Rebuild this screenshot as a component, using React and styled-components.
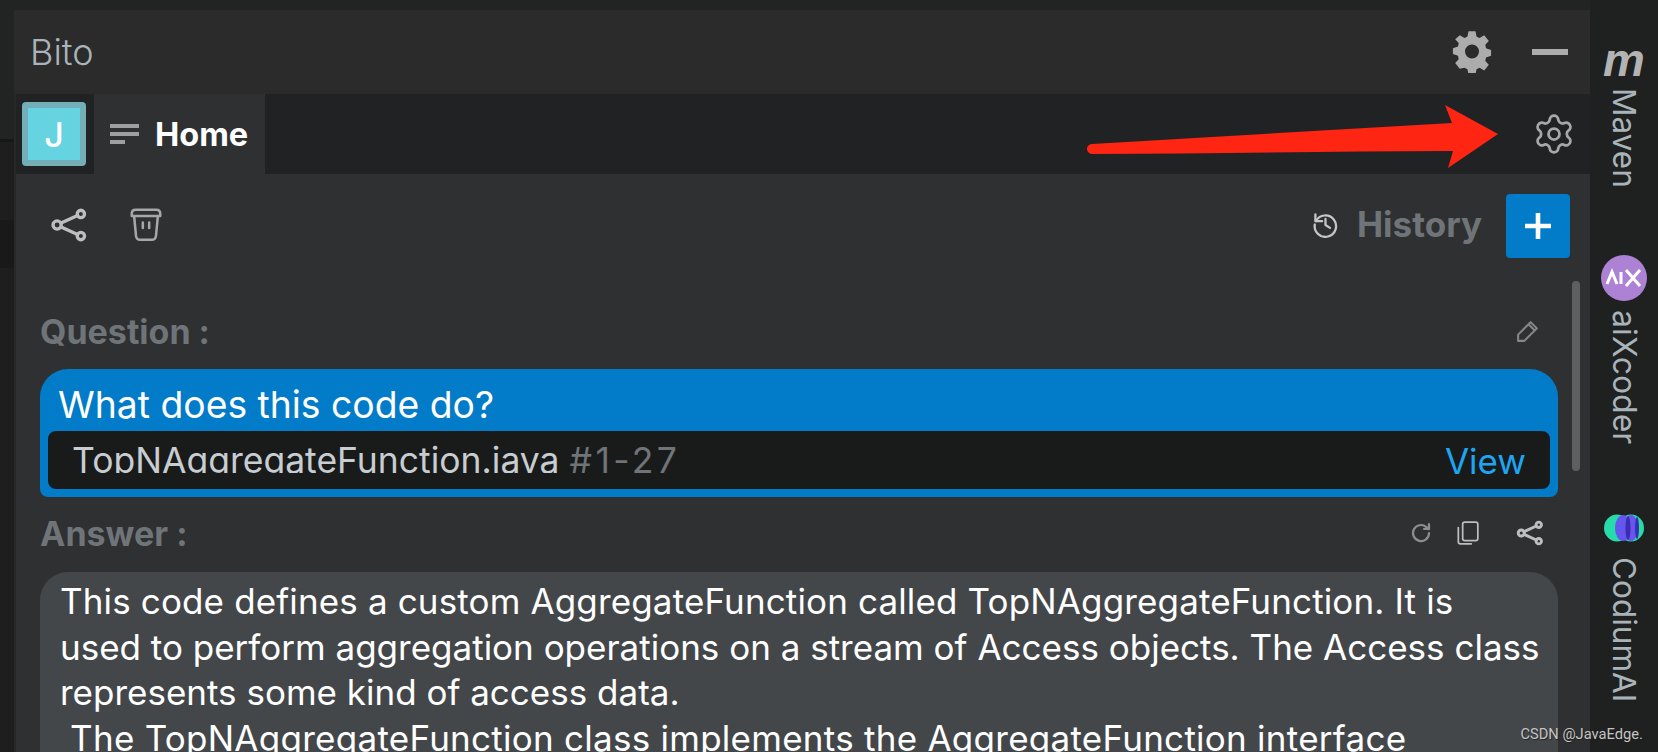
import React from "react"
import styled, { createGlobalStyle } from "styled-components"
import { Settings } from "lucide-react"

const GlobalStyle = createGlobalStyle`
  html, body {
    margin: 0;
    padding: 0;
    background: #1f2020;
  }
`

const Page = styled.div`
  position: relative;
  display: flex;
  width: 1658px;
  height: 752px;
  overflow: hidden;
  background: #202121;
  font-family: Inter, "Liberation Sans", sans-serif;
`

const LeftEdge = styled.div`
  display: flex;
  flex-direction: column;
  width: 14px;
  flex: none;
`

const EdgeBlock = styled.div`
  height: ${({ h }) => (h ? `${h}px` : "auto")};
  flex: ${({ h }) => (h ? "none" : 1)};
  background: ${({ bg }) => bg};
`

const Panel = styled.div`
  display: flex;
  flex-direction: column;
  width: 1576px;
  flex: none;
  padding-top: 10px;
  background: #222323;
`

const TitleBar = styled.div`
  display: flex;
  align-items: center;
  height: 84px;
  flex: none;
  padding: 0 22px 0 16px;
  background: #2b2b2b;
`

const Title = styled.span`
  flex: 1;
  font-size: 36px;
  font-weight: 300;
  color: #a9b4ba;
`

const TitleGear = styled.svg`
  width: 42px;
  height: 42px;
  margin-right: 39px;
  fill: #acacac;
`

const Minimize = styled.div`
  width: 36px;
  height: 6px;
  background: #acacac;
`

const Body = styled.div`
  display: flex;
  flex-direction: column;
  flex: 1;
  min-height: 0;
  border-left: 2px solid #272828;
  background: #2f3032;
`

const TabRow = styled.div`
  display: flex;
  align-items: center;
  height: 80px;
  flex: none;
  padding-right: 14px;
  background: #212224;
`

const AvatarCell = styled.div`
  display: flex;
  justify-content: center;
  width: 78px;
  flex: none;
  padding-right: 2px;
  box-sizing: border-box;
`

const Avatar = styled.div`
  display: flex;
  align-items: center;
  justify-content: center;
  box-sizing: border-box;
  width: 64px;
  height: 64px;
  border: 6px solid #74aeb8;
  border-radius: 4px;
  background: #66d3e1;
  font-size: 34px;
  font-weight: 500;
  color: #fff;
`

const HomeTab = styled.div`
  display: flex;
  align-items: center;
  gap: 16px;
  align-self: stretch;
  width: 171px;
  box-sizing: border-box;
  padding-left: 16px;
  background: #2f3032;
  font-size: 32.5px;
  font-weight: 700;
  color: #fff;
`

const Lines = styled.svg`
  width: 29px;
  height: 21px;
  fill: #9d9fa1;
`

const Spacer = styled.div`
  flex: 1;
`

const OutlineGear = styled(Settings)`
  width: 44px;
  height: 44px;
  color: #a5a7a8;
  flex: none;
`

const Toolbar = styled.div`
  display: flex;
  align-items: center;
  height: 64px;
  flex: none;
  margin-top: 20px;
  padding: 0 20px 0 34px;
`

const ToolIcon = styled.svg`
  width: ${({ size }) => size || 24}px;
  height: ${({ size }) => size || 24}px;
  margin-left: ${({ gap }) => gap || 0}px;
  margin-right: ${({ after }) => after || 0}px;
  margin-bottom: ${({ lift }) => lift || 0}px;
  fill: none;
  stroke: ${({ color }) => color || "#bcbebf"};
  stroke-width: ${({ sw }) => sw || 2};
  stroke-linecap: round;
  stroke-linejoin: round;
  flex: none;
`

const HistoryLabel = styled.span`
  margin: 0 24px 5px 18px;
  font-size: 35px;
  font-weight: 700;
  color: #6f7478;
`

const AddButton = styled.div`
  display: flex;
  align-items: center;
  justify-content: center;
  width: 64px;
  height: 64px;
  border-radius: 4px;
  background: #027bc9;
`

const Content = styled.div`
  position: relative;
  display: flex;
  flex-direction: column;
  flex: 1;
  min-height: 0;
  padding: 0 32px 0 24px;
  overflow: hidden;
`

const Scrollbar = styled.div`
  position: absolute;
  top: 23px;
  right: 10px;
  width: 8px;
  height: 190px;
  border-radius: 4px;
  background: #5e5f60;
`

const SectionHead = styled.div`
  display: flex;
  align-items: center;
  height: 44px;
  flex: none;
  margin-top: ${({ top }) => top}px;
`

const Label = styled.span`
  flex: 1;
  font-size: 34px;
  font-weight: 700;
  color: #6f7478;
`

const QuestionCard = styled.div`
  height: 128px;
  flex: none;
  box-sizing: border-box;
  margin-top: 16px;
  padding: 0 8px;
  border-radius: 28px 28px 8px 8px;
  background: #027bc9;
`

const QuestionText = styled.div`
  height: 62px;
  padding-left: 10px;
  font-size: 37.3px;
  line-height: 71px;
  white-space: nowrap;
  color: #fff;
`

const FileBar = styled.div`
  display: flex;
  height: 58px;
  padding: 0 24px;
  border-radius: 8px;
  background: #191b1b;
`

const FileClip = styled.div`
  flex: 1;
  height: 42px;
  overflow: hidden;
  font-size: 35.5px;
  line-height: 60px;
  white-space: nowrap;
  color: #c7cdd1;
`

const FileRange = styled.span`
  letter-spacing: 3.4px;
  color: #6f7478;
`

const ViewLink = styled.span`
  font-size: 35px;
  line-height: 60px;
  color: #1ea5f2;
`

const AnswerCard = styled.div`
  flex: 1;
  margin-top: 17px;
  padding: 7px 20px 0;
  border-radius: 28px 28px 0 0;
  background: #44474a;
  font-size: 35px;
  line-height: 45.5px;
  color: #fff;
`

const AnswerLine = styled.div`
  white-space: pre;
  letter-spacing: ${({ track }) => track || 0}px;
`

const Sidebar = styled.div`
  display: flex;
  flex-direction: column;
  align-items: center;
  width: 68px;
  flex: none;
  padding-top: 40px;
  background: #1f2020;
`

const MavenMark = styled.span`
  font-family: "Liberation Sans", sans-serif;
  font-size: 47px;
  font-style: italic;
  font-weight: 700;
  line-height: 40px;
  color: #b3b3b3;
`

const VerticalLabel = styled.span`
  margin-top: ${({ top }) => top}px;
  writing-mode: vertical-rl;
  font-size: ${({ size }) => size || 31.5}px;
  font-weight: 400;
  line-height: 40px;
  color: #a9b4ba;
`

const AixBadge = styled.svg`
  width: 46px;
  height: 46px;
  margin-top: ${({ top }) => top}px;
  flex: none;
`

const CodiumMark = styled.svg`
  width: 40px;
  height: 28px;
  margin-top: ${({ top }) => top}px;
  flex: none;
`

const Arrow = styled.svg`
  position: absolute;
  top: 100px;
  left: 1084px;
  width: 420px;
  height: 72px;
`

const Watermark = styled.span`
  position: absolute;
  right: 15px;
  bottom: 9px;
  font-family: Roboto, sans-serif;
  font-size: 14.7px;
  color: #c4c4c4;
  text-shadow: 1px 1px 1px #222;
`

const ShareIcon = (props) => (
  <ToolIcon viewBox="0 0 24 24" {...props}>
    <circle cx="19.5" cy="5" r="2.3" />
    <circle cx="4.5" cy="12" r="2.6" />
    <circle cx="19.5" cy="19" r="2.3" />
    <path d="M7 10.8 17.4 6M7 13.2 17.4 18" />
  </ToolIcon>
)

export default function App() {
  return (
    <Page>
      <GlobalStyle />
      <LeftEdge>
        <EdgeBlock h={139} bg="#222323" />
        <EdgeBlock h={3} bg="#161717" />
        <EdgeBlock h={78} bg="#1e1e1e" />
        <EdgeBlock h={48} bg="#191919" />
        <EdgeBlock bg="#1e1e1e" />
      </LeftEdge>
      <Panel>
        <TitleBar>
          <Title>Bito</Title>
          <TitleGear viewBox="0 0 24 24">
            <path
              fillRule="evenodd"
              d="M10 1h4l.6 3 1.7.8L19 3.2l2.6 3.3-2 2.2.4 1.9 2.9 1v3.4l-2.9 1-.4 1.9 2 2.2-2.6 3.3-2.7-1.6-1.7.8-.6 3h-4l-.6-3-1.7-.8L5 22.4l-2.6-3.3 2-2.2-.4-1.9-2.9-1v-3.4l2.9-1 .4-1.9-2-2.2L5 3.2l2.7 1.6 1.7-.8zM12 8.5a4 4 0 1 0 0 8 4 4 0 0 0 0-8z"
              transform="translate(0 -.8)"
            />
          </TitleGear>
          <Minimize />
        </TitleBar>
        <Body>
          <TabRow>
            <AvatarCell>
              <Avatar>J</Avatar>
            </AvatarCell>
            <HomeTab>
              <Lines viewBox="0 0 29 21">
                <rect width="29" height="4" y="0" />
                <rect width="29" height="4" y="8" />
                <rect width="15" height="4" y="16" />
              </Lines>
              Home
            </HomeTab>
            <Spacer />
            <OutlineGear strokeWidth={1.5} />
          </TabRow>
          <Toolbar>
            <ShareIcon size={38} sw={2.1} lift={2} />
            <ToolIcon viewBox="0 0 24 24" size={38} gap={39} sw={1.6} lift={4} color="#a5a7a8">
              <path d="M3 5.5c0-1.5 1-2.5 2.5-2.5h13C20 3 21 4 21 5.5V7H3zM4.5 7l1.2 12.5C5.9 21 6.8 22 8.300 22h7.400c1.500 0 2.400-1 2.600-2.500L19.500 7M10 11v3.500M14 11v3.500" />
            </ToolIcon>
            <Spacer />
            <ToolIcon viewBox="0 0 24 24" size={27} sw={2} lift={4} color="#c3c7c9">
              <path d="M3 3v6h6" />
              <path d="M3.5 9A9.500 9.500 0 1 1 2.500 12" />
              <path d="M12 7v5.500l4 2.500" />
            </ToolIcon>
            <HistoryLabel>History</HistoryLabel>
            <AddButton>
              <ToolIcon viewBox="0 0 30 30" size={30} sw={4.6} color="#fff">
                <path d="M15 2v26M2 15h26" style={{ strokeLinecap: "butt" }} />
              </ToolIcon>
            </AddButton>
          </Toolbar>
          <Content>
            <Scrollbar />
            <SectionHead top={51}>
              <Label>Question :</Label>
              <ToolIcon viewBox="0 0 24 24" size={25} sw={2} after={18} color="#85888a">
                <path d="M3 21v-6L15 3l6 6L9 21zM13 5l6 6" />
              </ToolIcon>
            </SectionHead>
            <QuestionCard>
              <QuestionText>What does this code do?</QuestionText>
              <FileBar>
                <FileClip>
                  TopNAggregateFunction.java <FileRange>#1-27</FileRange>
                </FileClip>
                <ViewLink>View</ViewLink>
              </FileBar>
            </QuestionCard>
            <SectionHead top={14}>
              <Label>Answer :</Label>
              <ToolIcon viewBox="0 0 24 24" size={24} sw={2.2} color="#8c8f91">
                <path d="M20 12a8 8 0 1 1-3-6.200L20 8M20 3v5h-5" />
              </ToolIcon>
              <ToolIcon viewBox="0 0 24 24" size={26} gap={21} sw={1.6}>
                <rect x="8" y="2" width="14" height="17" rx="2" />
                <path d="M4 7v13a2 2 0 0 0 2 2h10" />
              </ToolIcon>
              <ShareIcon size={28} gap={36} after={14} sw={2.5} />
            </SectionHead>
            <AnswerCard>
              <AnswerLine track={0.14}>This code defines a custom AggregateFunction called TopNAggregateFunction. It is</AnswerLine>
              <AnswerLine>used to perform aggregation operations on a stream of Access objects. The Access class</AnswerLine>
              <AnswerLine>represents some kind of access data.</AnswerLine>
              <AnswerLine track={0.26}> The TopNAggregateFunction class implements the AggregateFunction interface</AnswerLine>
            </AnswerCard>
          </Content>
        </Body>
      </Panel>
      <Sidebar>
        <MavenMark>m</MavenMark>
        <VerticalLabel top={8}>Maven</VerticalLabel>
        <AixBadge viewBox="0 0 46 46" top={67}>
          <circle cx="23" cy="23" r="23" fill="#ad82d4" />
          <path d="M6 29 11 17l5 12M20 17v12M25 15l14 16M39 15 25 31" fill="none" stroke="#fff" strokeWidth="3" />
        </AixBadge>
        <VerticalLabel top={9} size={32}>aiXcoder</VerticalLabel>
        <CodiumMark viewBox="0 0 40 28" top={70}>
          <ellipse cx="13" cy="14" rx="13" ry="13.5" fill="#27dcaa" />
          <ellipse cx="27" cy="14" rx="13" ry="13.5" fill="#27dcaa" />
          <ellipse cx="19" cy="14" rx="8" ry="13" fill="#6456ee" />
          <ellipse cx="27" cy="14" rx="7" ry="13" fill="#6456ee" />
          <ellipse cx="24" cy="14" rx="2.5" ry="12" fill="#3d2bb0" />
          <ellipse cx="33" cy="14" rx="2" ry="11" fill="#3d2bb0" />
        </CodiumMark>
        <VerticalLabel top={15}>CodiumAI</VerticalLabel>
      </Sidebar>
      <Arrow viewBox="0 0 420 72">
        <path
          d="M414 34 361 5l7 18L8 44c-4 .5-5 3-5 5s2 5 5 5c120 0 240-3 361-3l-5 17z"
          fill="#fe2513"
        />
      </Arrow>
      <Watermark>CSDN @JavaEdge.</Watermark>
    </Page>
  )
}
